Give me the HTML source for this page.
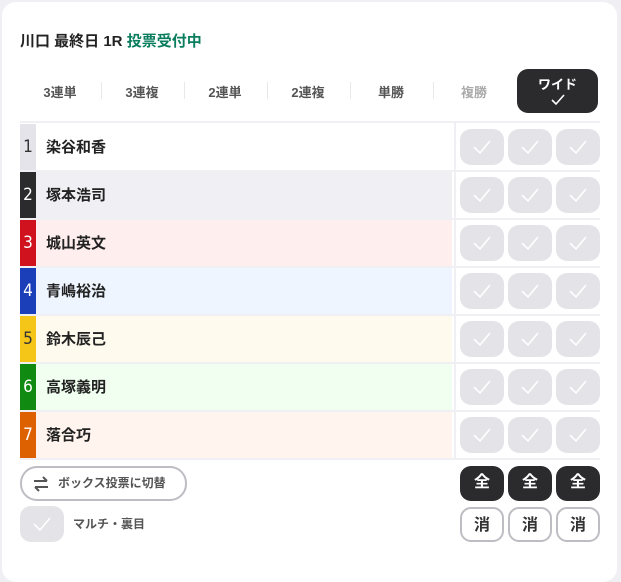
<!DOCTYPE html>
<html><head><meta charset="utf-8"><style>
*{margin:0;padding:0;box-sizing:border-box}
body{width:621px;height:567px;background:#f0f0f4;font-family:"Liberation Sans","Noto Sans CJK JP",sans-serif;position:relative;overflow:hidden}
.card{position:absolute;left:2px;top:2px;width:615px;height:580px;background:#fff;border-radius:14px}
.ab{position:absolute}
.title{left:20px;top:30px;font-size:15px;font-weight:bold;color:#222}
.title span{color:#0a7d5e}
.tab{position:absolute;top:82px;font-size:13px;font-weight:bold;color:#555;width:80px;text-align:center}
.sep{position:absolute;top:82px;width:1px;height:17px;background:#e8e8ec}
.wide{left:517px;top:69px;width:81px;height:44px;background:#2b2b2e;border-radius:11px;color:#fff;font-size:13px;font-weight:bold;text-align:center;padding-top:5px}
.row{position:absolute;left:20px;width:432px;height:46px}
.num{position:absolute;left:0;top:0;width:16px;height:46px;font-size:17px;text-align:center;line-height:46px;font-family:"DejaVu Sans Condensed","Liberation Sans",sans-serif}
.name{position:absolute;left:26px;top:1px;line-height:46px;font-size:15px;font-weight:bold;color:#222}
.hl{position:absolute;left:20px;width:580px;height:2px;background:#f0f0f4}
.cb{position:absolute;width:44px;height:36px;background:#e3e3e8;border-radius:11px}
.cb svg{position:absolute;left:12px;top:8px}
.btn{position:absolute;width:44px;height:35px;border-radius:11px;font-size:16px;font-weight:bold;text-align:center;line-height:34px}
.all{background:#2b2b2e;color:#fff}
.clr{border:2px solid #bdbdc3;color:#333;background:#fff}
</style></head><body>
<div class="card"></div>
<div class="ab title">川口 最終日 1R <span>投票受付中</span></div>
<div class="tab" style="left:20px">3連単</div><div class="sep" style="left:101px"></div>
<div class="tab" style="left:102px">3連複</div><div class="sep" style="left:184px"></div>
<div class="tab" style="left:185px">2連単</div><div class="sep" style="left:267px"></div>
<div class="tab" style="left:268px">2連複</div><div class="sep" style="left:350px"></div>
<div class="tab" style="left:351px">単勝</div><div class="sep" style="left:433px"></div>
<div class="tab" style="left:434px;color:#aaa">複勝</div>
<div class="ab wide">ワイド<br><svg width="16" height="14" viewBox="0 0 16 14"><path d="M2 7l4 4 8-9" stroke="#fff" stroke-width="1.6" fill="none"/></svg></div>
<div class="hl" style="top:121px"></div>
<div class="ab" style="left:454px;top:123px;width:2px;height:336px;background:#f0f0f4"></div>

<div class="row" style="top:124px;background:#fff"><div class="num" style="background:#e4e4ea;color:#333">1</div><div class="name">染谷和香</div></div>
<div class="row" style="top:172px;background:#f0f0f4"><div class="num" style="background:#2b2b2e;color:#fff">2</div><div class="name">塚本浩司</div></div>
<div class="row" style="top:220px;background:#ffeeee"><div class="num" style="background:#d0121f;color:#fff">3</div><div class="name">城山英文</div></div>
<div class="row" style="top:268px;background:#eef5ff"><div class="num" style="background:#1a3fb8;color:#fff">4</div><div class="name">青嶋裕治</div></div>
<div class="row" style="top:316px;background:#fffaee"><div class="num" style="background:#f5c518;color:#333">5</div><div class="name">鈴木辰己</div></div>
<div class="row" style="top:364px;background:#f0fff0"><div class="num" style="background:#118a11;color:#fff">6</div><div class="name">高塚義明</div></div>
<div class="row" style="top:412px;background:#fff4ee"><div class="num" style="background:#dd6100;color:#fff">7</div><div class="name">落合巧</div></div>
<div class="hl" style="top:170px"></div><div class="hl" style="top:218px"></div><div class="hl" style="top:266px"></div><div class="hl" style="top:314px"></div><div class="hl" style="top:362px"></div><div class="hl" style="top:410px"></div><div class="hl" style="top:458px"></div>

<div id="cbs"></div>
<script>
var h='';var ck='<svg width="20" height="20" viewBox="0 0 20 20"><path d="M2 10l6 6 10-12" stroke="#fff" stroke-width="1.6" fill="none"/></svg>';
for(var r=0;r<7;r++)for(var c=0;c<3;c++)h+='<div class="cb" style="left:'+(460+c*48)+'px;top:'+(129+r*48)+'px">'+ck+'</div>';
for(var c=0;c<3;c++){h+='<div class="btn all" style="left:'+(460+c*48)+'px;top:466px">全</div>';h+='<div class="btn clr" style="left:'+(460+c*48)+'px;top:507px">消</div>';}
document.getElementById('cbs').innerHTML=h;
</script>
<div class="ab" style="left:20px;top:466px;width:167px;height:35px;border:2px solid #bdbdc3;border-radius:17px;font-size:12px;font-weight:bold;color:#555;line-height:31px;padding-left:36px">ボックス投票に切替
<svg class="ab" style="left:10px;top:8px" width="18" height="16" viewBox="0 0 18 16"><path d="M2 5h13M11 1l4 4M16 11H3M7 15l-4-4" stroke="#555" stroke-width="2" fill="none"/></svg></div>
<div class="cb" style="left:20px;top:506px;width:44px;height:36px">
<svg width="20" height="20" viewBox="0 0 20 20"><path d="M2 10l6 6 10-12" stroke="#fff" stroke-width="1.6" fill="none"/></svg></div>
<div class="ab" style="left:73px;top:515px;font-size:12px;font-weight:bold;color:#555">マルチ・裏目</div>
</body></html>
